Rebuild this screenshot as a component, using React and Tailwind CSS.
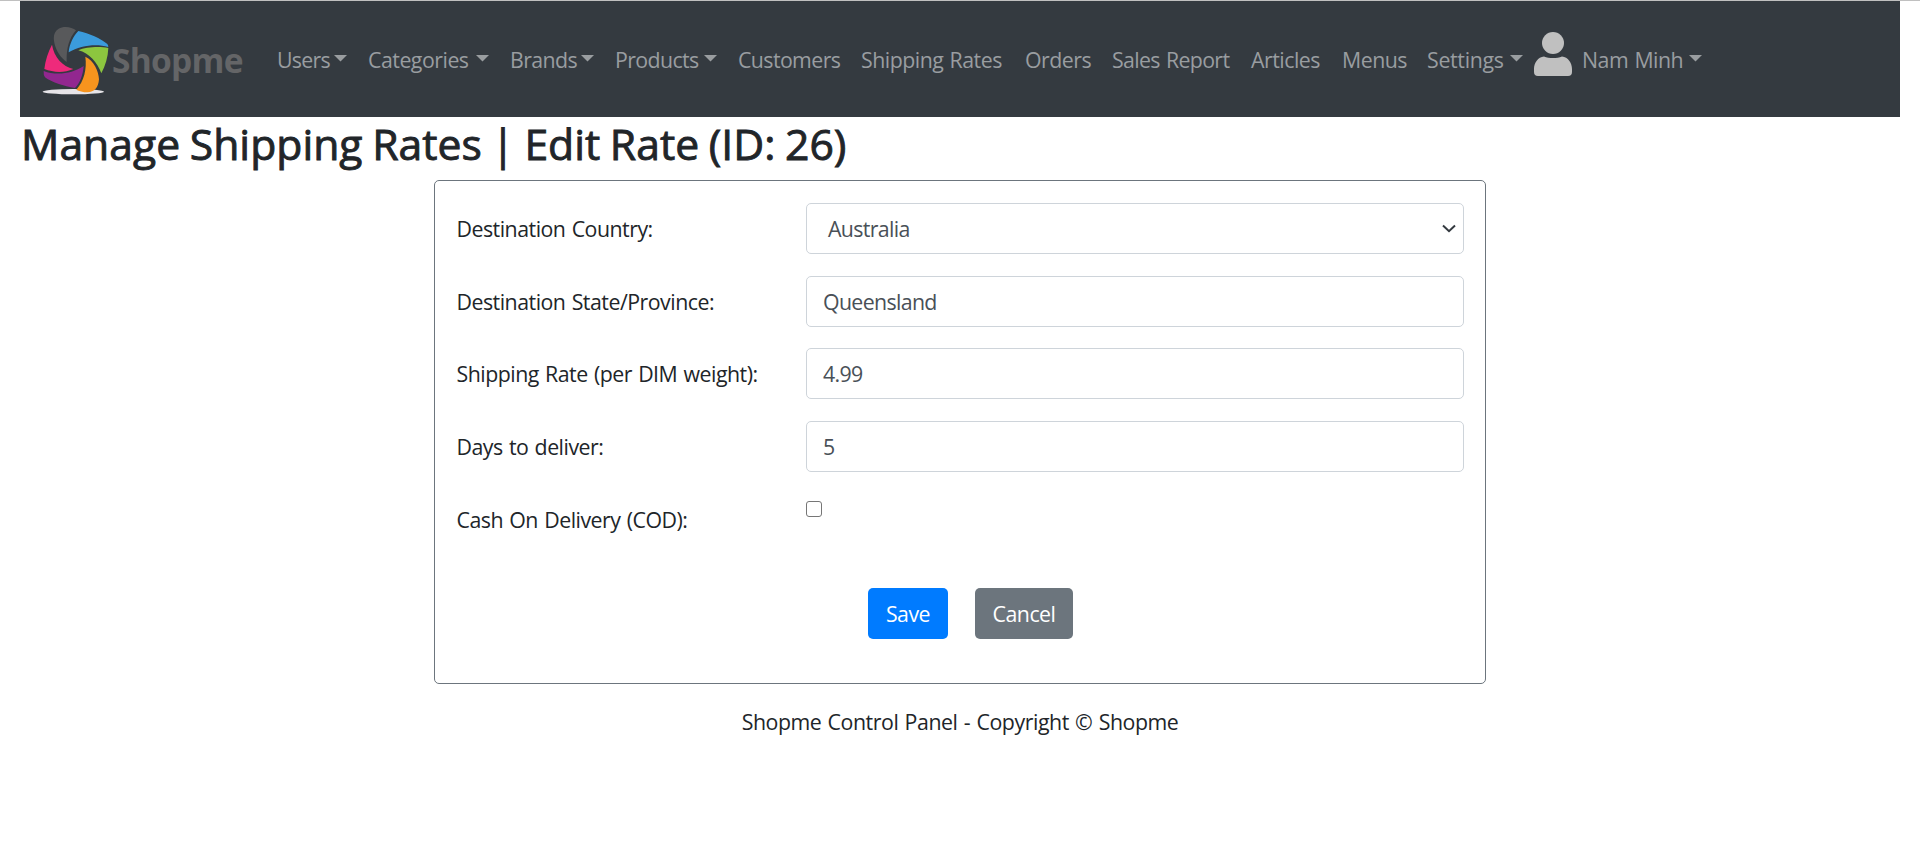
const NAV = [
  { label: "Users", caret: true, box: "w-[91px]", text: "w-[57px] tracking-[-0.7px]" },
  { label: "Categories", caret: true, box: "w-[142px]", text: "w-[108px]" },
  { label: "Brands", caret: true, box: "w-[105px]", text: "w-[71px] tracking-[-0.6px]" },
  { label: "Products", caret: true, box: "w-[123px]", text: "w-[89px] tracking-[-0.6px]" },
  { label: "Customers", box: "w-[123px] tracking-[-0.6px]" },
  { label: "Shipping Rates", box: "w-[164px]" },
  { label: "Orders", box: "w-[87px]" },
  { label: "Sales Report", box: "w-[139px] tracking-[-0.65px]" },
  { label: "Articles", box: "w-[91px]" },
  { label: "Menus", box: "w-[85px]" },
  { label: "Settings", caret: true, box: "w-[106px]", text: "w-[83px] tracking-[-0.3px]" },
];

const FIELDS = [
  { label: "Destination Country:", value: "Australia", select: true },
  { label: "Destination State/Province:", value: "Queensland" },
  { label: "Shipping Rate (per DIM weight):", value: "4.99" },
  { label: "Days to deliver:", value: "5" },
];

function Caret() {
  return (
    <svg className="mb-[2px] h-[7px] w-[13px] shrink-0" viewBox="0 0 13 7" fill="currentColor">
      <path d="M0 0H13L6.5 6.5Z" />
    </svg>
  );
}

function Logo() {
  return (
    <div className="flex h-[72px] w-[205px] shrink-0 items-center">
      <svg className="mt-[4px] h-[70px] w-[68px] shrink-0" viewBox="18 18 204 210">
        <ellipse cx="112" cy="215" rx="92" ry="8" fill="#e6e4e8" />
        <path d="M120 31C108 20 82 17 68 26C54 34 51 50 55 68C60 92 74 113 92 126C91 93 96 58 120 31Z" fill="#58595b" />
        <path d="M127 33C160 41 194 55 214 72Q217 76 217 81C179 70 133 77 98 97C100 73 112 48 127 33Z" fill="#3b9bdc" />
        <path d="M127 91C149 81 190 79 217 84C216 111 208 137 196 160C184 128 160 99 127 91Z" fill="#8cc63f" />
        <path d="M148 110C174 122 188 153 189 178C187 203 176 216 154 217C142 217 128 213 121 209C144 183 153 147 148 110Z" fill="#f7941e" />
        <path d="M143 138C141 165 132 189 117 204C85 200 44 185 27 172Q22 165 23 153C60 167 108 162 143 138Z" fill="#92278f" />
        <path d="M48 74C54 112 80 139 112 147C83 160 51 157 25 147C28 121 36 96 48 74Z" fill="#ee2a7b" />
      </svg>
      <span className="ml-[2px] mt-[3px] whitespace-nowrap text-[33.5px] font-bold tracking-[-0.7px] text-[#646567]">Shopme</span>
    </div>
  );
}

export default function App() {
  return (
    <div className="flex min-h-screen flex-col border-t border-[#c0c0c0] bg-white px-5 font-['Open_Sans',sans-serif] text-[21.33px] tracking-[-0.5px] text-[#212529] [word-spacing:1.2px]">
      <nav className="flex h-[116px] items-center bg-[#343a40] pl-[22px] text-[#999da0]">
        <Logo />
        <div className="ml-[30px] flex items-center pt-[1px]">
          {NAV.map((n) => (
            <a key={n.label} className={`flex shrink-0 items-center whitespace-nowrap pt-[1px] ${n.box}`}>
              <span className={n.text}>{n.label}</span>
              {n.caret && <Caret />}
            </a>
          ))}
          <svg className="mb-[11px] ml-[1px] h-[44px] w-[38px] shrink-0" viewBox="0 0 38 44" fill="#c0c0c0">
            <circle cx="19" cy="11" r="11" />
            <path d="M10 24.500C15 26.500 23 26.500 28 24.500C34 25 38 31 38 37V40Q38 44 34 44H4Q0 44 0 40V37C0 31 4 25 10 24.500Z" />
          </svg>
          <a className="ml-[10px] flex items-center whitespace-nowrap pt-[1px]">
            <span className="w-[107px]">Nam Minh</span>
            <Caret />
          </a>
        </div>
      </nav>
      <h2 className="mt-[1px] h-[51px] whitespace-nowrap pl-[1px] text-[42.67px] font-medium leading-[51px] tracking-[0.02px] [-webkit-text-stroke:0.9px_#212529] [word-spacing:-1.5px]">
        Manage Shipping Rates | Edit Rate (ID: 26)
      </h2>
      <form className="mx-auto mt-[11px] h-[504px] w-[1052px] rounded-[5px] border border-[#6c757d] px-[21px] pt-[22px]">
        {FIELDS.map((f) => (
          <div key={f.label} className="flex h-[72.67px]">
            <label className="h-[51px] w-[350px] shrink-0 whitespace-nowrap pl-[0.5px] leading-[51px]">{f.label}</label>
            <div className={`flex h-[51px] w-[658px] items-center justify-between rounded-[5px] border border-[#ced4da] pr-[7px] text-[#495057] ${f.select ? "pl-[21px]" : "pl-[16px]"}`}>
              <span className="pt-[1px] tracking-[-0.65px]">{f.value}</span>
              {f.select && (
                <svg className="h-[9px] w-[14px]" viewBox="0 0 14 9" fill="none" stroke="#343a40" strokeWidth="2">
                  <path d="M1 1.500L7 7.200L13 1.500" />
                </svg>
              )}
            </div>
          </div>
        ))}
        <div className="flex h-[94.3px]">
          <label className="w-[350px] pl-[0.5px] leading-[51px]">Cash On Delivery (COD):</label>
          <span className="mt-[7.3px] h-[16px] w-[16px] rounded-[3px] border border-[#767676]" />
        </div>
        <div className="flex gap-[27px] pl-[412px] text-white">
          <button type="button" className="h-[51px] w-[80px] rounded-[5px] bg-[#007bff] pt-px">Save</button>
          <button type="button" className="h-[51px] w-[98px] rounded-[5px] bg-[#6c757d] pt-px">Cancel</button>
        </div>
      </form>
      <p className="mt-[22px] text-center leading-8 tracking-[-0.45px]">Shopme Control Panel - Copyright © Shopme</p>
    </div>
  );
}
